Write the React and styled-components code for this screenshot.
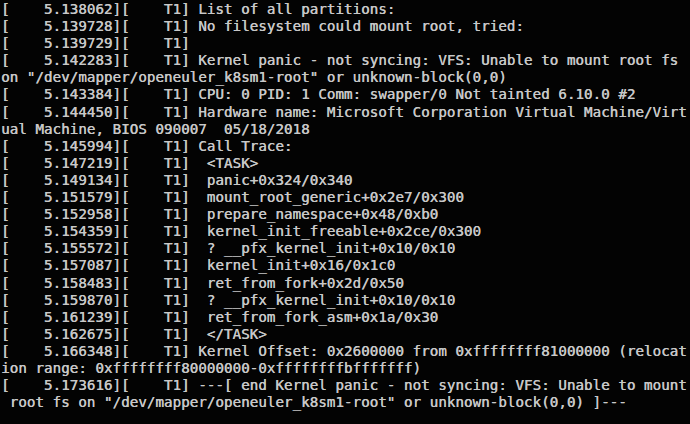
import React from "react";
import styled, { createGlobalStyle } from "styled-components";

const entries = [
  ["5.138062", "List of all partitions:"],
  ["5.139728", "No filesystem could mount root, tried:"],
  ["5.139729", ""],
  ["5.142283", "Kernel panic - not syncing: VFS: Unable to mount root fs"],
  [null, 'on "/dev/mapper/openeuler_k8sm1-root" or unknown-block(0,0)'],
  ["5.143384", "CPU: 0 PID: 1 Comm: swapper/0 Not tainted 6.10.0 #2"],
  ["5.144450", "Hardware name: Microsoft Corporation Virtual Machine/Virt"],
  [null, "ual Machine, BIOS 090007  05/18/2018"],
  ["5.145994", "Call Trace:"],
  ["5.147219", " <TASK>"],
  ["5.149134", " panic+0x324/0x340"],
  ["5.151579", " mount_root_generic+0x2e7/0x300"],
  ["5.152958", " prepare_namespace+0x48/0xb0"],
  ["5.154359", " kernel_init_freeable+0x2ce/0x300"],
  ["5.155572", " ? __pfx_kernel_init+0x10/0x10"],
  ["5.157087", " kernel_init+0x16/0x1c0"],
  ["5.158483", " ret_from_fork+0x2d/0x50"],
  ["5.159870", " ? __pfx_kernel_init+0x10/0x10"],
  ["5.161239", " ret_from_fork_asm+0x1a/0x30"],
  ["5.162675", " </TASK>"],
  ["5.166348", "Kernel Offset: 0x2600000 from 0xffffffff81000000 (relocat"],
  [null, "ion range: 0xffffffff80000000-0xffffffffbfffffff)"],
  ["5.173616", "---[ end Kernel panic - not syncing: VFS: Unable to mount"],
  [null, ' root fs on "/dev/mapper/openeuler_k8sm1-root" or unknown-block(0,0) ]---'],
];

const stamp = (t) => `[${t.padStart(12, " ")}][    T1]`;

export default function App() {
  return (
    <>
      <GlobalStyle />
      <Screen>
        {entries.map(([time, text], i) => (
          <Line key={i}>
            {time ? `${stamp(time)} ${text}` : text}
          </Line>
        ))}
      </Screen>
    </>
  );
}

const GlobalStyle = createGlobalStyle`
  html, body {
    margin: 0;
    padding: 0;
    background: #000;
  }
`;

// VGA text console, 80 columns squeezed into 690px
const Screen = styled.main`
  width: 690px;
  height: 424px;
  overflow: hidden;
  background: #030303;
  color: #c8c8c8;
  font-family: "DejaVu Sans Mono", "Liberation Mono", monospace;
  font-size: 14.2px;
  letter-spacing: 0.03px;
  text-shadow: 0.4px 0 0 #c8c8c8;
  padding: 1px 0 0 1px;
  box-sizing: border-box;
`;

const Line = styled.div`
  height: 17.1px;
  line-height: 17.1px;
  white-space: pre;
`;
